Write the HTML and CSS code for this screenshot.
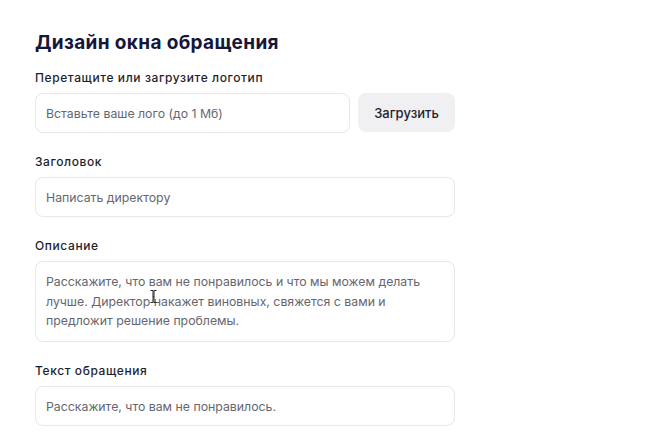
FILE: index.html
```html
<!DOCTYPE html>
<html lang="ru">
<head>
<meta charset="utf-8">
<link rel="stylesheet" href="styles.css">
</head>
<body>
<div class="page">
  <h1 class="title">Дизайн окна обращения</h1>
  <div class="field">
    <div class="label">Перетащите или загрузите логотип</div>
    <div class="row">
      <div class="input grow">Вставьте ваше лого (до 1 Мб)</div>
      <div class="btn">Загрузить</div>
    </div>
  </div>
  <div class="field">
    <div class="label">Заголовок</div>
    <div class="input">Написать директору</div>
  </div>
  <div class="field">
    <div class="label">Описание</div>
    <div class="input area">Расскажите, что вам не понравилось и что мы можем делать лучше. Директор накажет виновных, свяжется с вами и предложит решение проблемы.
      <svg class="cursor" width="7" height="13" viewBox="0 0 7 13"><path d="M0.5 0.5h2.5v12H0.5M6.5 0.5H4v12h2.5M3 6.5h1" fill="none" stroke="#222" stroke-width="1"/></svg>
    </div>
  </div>
  <div class="field">
    <div class="label">Текст обращения</div>
    <div class="input">Расскажите, что вам не понравилось.</div>
  </div>
</div>
</body>
</html>
```

FILE: styles.css
```css
* { box-sizing: border-box; }
html, body { margin: 0; background: #ffffff; }
body { font-family: "Inter", "Noto Sans", sans-serif; color: #1c1c2c; }
.page {
  width: 420px;
  margin-left: 35px;
  padding-top: 32px;
  display: flex;
  flex-direction: column;
  gap: 21px;
}
.title {
  margin: 0 0 -5px 0;
  font-size: 19px;
  line-height: 22px;
  font-weight: 700;
  color: #16163a;
  letter-spacing: 0.35px;
}
.field { display: flex; flex-direction: column; gap: 7px; }
.label {
  font-size: 12px;
  line-height: 16px;
  font-weight: 500;
  color: #1e1e2c;
  letter-spacing: 0.6px;
}
.row { display: flex; gap: 8px; }
.grow { flex: 1; }
.input {
  height: 40px;
  border: 1px solid #e7e7ec;
  border-radius: 8px;
  padding: 0 10px;
  display: flex;
  align-items: center;
  font-size: 12.3px;
  color: #66666f;
  background: #fff;
}
.input.area {
  position: relative;
  height: 81px;
  align-items: flex-start;
  padding: 10px 10px;
  line-height: 19.5px;
}
.btn {
  width: 97px;
  height: 39px;
  border-radius: 8px;
  background: #f0f0f3;
  display: flex;
  align-items: center;
  justify-content: center;
  font-size: 13px;
  font-weight: 500;
  color: #1e1e2c;
}
.cursor { position: absolute; left: 114px; top: 28px; }
```
